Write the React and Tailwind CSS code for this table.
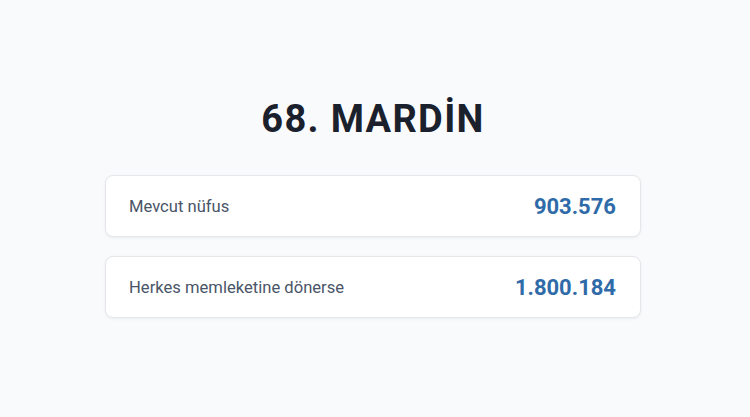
export default function App() {
  return (
    <div className="min-h-[417px] w-full bg-[#f8fafc] flex flex-col items-center pt-[94px]" style={{ fontFamily: "Roboto, 'Noto Sans', sans-serif" }}>
      <h1 className="text-[38px] leading-[50px] font-bold text-[#1a202c] tracking-[0.035em] mr-[4px]">68. MARDİN</h1>
      <div className="mt-[31px] w-[536px] flex flex-col gap-[19px] mr-[4px]">
        <div className="h-[62px] bg-white rounded-lg border border-[#e5e7eb] shadow-[0_1px_3px_rgba(0,0,0,0.06)] flex items-center justify-between pl-[23px] pr-[24px]">
          <span className="text-[16.6px] text-[#4a5568] mt-[3px]">Mevcut nüfus</span>
          <span className="text-[22px] font-bold text-[#2f6ba8]">903.576</span>
        </div>
        <div className="h-[62px] bg-white rounded-lg border border-[#e5e7eb] shadow-[0_1px_3px_rgba(0,0,0,0.06)] flex items-center justify-between pl-[23px] pr-[24px]">
          <span className="text-[16.6px] text-[#4a5568] mt-[3px]">Herkes memleketine dönerse</span>
          <span className="text-[22px] font-bold text-[#2f6ba8]">1.800.184</span>
        </div>
      </div>
    </div>
  );
}
